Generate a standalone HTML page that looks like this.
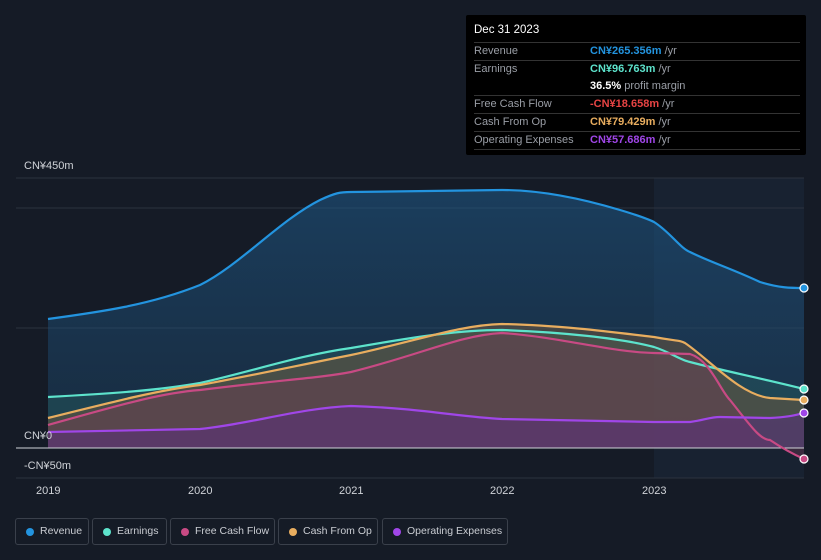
<!DOCTYPE html>
<html><head><meta charset="utf-8"><style>
body{margin:0;width:821px;height:560px;background:#151b26;font-family:"Liberation Sans",sans-serif;overflow:hidden;position:relative}
.tt{position:absolute;left:466px;top:15px;width:340px;height:140px;background:#000;border-radius:2px;box-sizing:border-box;padding:0 6px 0 8px;font-size:11px}
.tt .h{color:#fff;font-size:11.5px;padding:9px 0 6px 0;border-bottom:1px solid #333}
.r{display:flex;height:17px;line-height:17px;border-bottom:1px solid #333}
.r.nb{border-bottom:none}
.r .k{width:116px;color:#9a9ea6}
.r .v b{font-weight:bold}
.g{color:#9a9ea6}
.lab{position:absolute;color:#d0d3d8;font-size:11px}
.leg{position:absolute;top:518px;height:27px;border:1px solid #3a404b;border-radius:3px;box-sizing:border-box;color:#c9ccd2;font-size:10.5px;line-height:25px;padding-left:24px;white-space:nowrap}
.leg i{position:absolute;left:10px;top:9px;width:8px;height:8px;border-radius:50%}
</style></head><body>
<svg width="821" height="560" style="position:absolute;left:0;top:0">
<defs>
<linearGradient id="rg" x1="0" y1="0" x2="0" y2="1"><stop offset="0" stop-color="#1e5a8a" stop-opacity=".55"/><stop offset="1" stop-color="#1e4a70" stop-opacity=".35"/></linearGradient>
</defs>
<rect x="654" y="178" width="150" height="300" fill="#1b2838" opacity=".6"/>
<line x1="16" y1="178" x2="804" y2="178" stroke="#2c333e"/>
<line x1="16" y1="208" x2="804" y2="208" stroke="#2c333e"/>
<line x1="16" y1="328" x2="804" y2="328" stroke="#2c333e"/>
<line x1="16" y1="478" x2="804" y2="478" stroke="#2c333e"/>
<path d="M48,319 C100,312 150,305 200,285 C240,265 280,220 320,200 C335,193 340,192 351,192 L502,190 C540,190 580,198 620,210 C640,216 650,220 654,222 C670,232 680,248 690,252 C710,262 730,268 760,282 C780,288 790,288 804,288 L804,448 L48,448Z" fill="url(#rg)"/>
<path d="M48,397 C120,393 160,390 200,383 C250,372 300,355 351,348 C420,336 460,330 502,330 C560,332 620,338 654,347 C670,352 680,360 690,362 C720,370 760,378 804,389 L804,448 L48,448Z" fill="#2a6a68" opacity=".35"/>
<path d="M48,418 C120,400 160,390 200,385 C260,374 300,365 351,355 C420,340 460,325 502,324 C560,325 620,333 654,337 C675,341 680,340 685,343 C710,360 740,395 770,398 L804,400 L804,448 L48,448Z" fill="#7a5a3a" opacity=".45"/>
<path d="M48,425 C120,405 160,393 200,390 C280,380 320,378 351,372 C420,355 460,335 502,333 C560,337 610,352 654,353 L690,354 C710,360 720,390 730,400 C750,425 760,440 770,440 C785,450 795,455 804,459 L804,448 L48,448Z" fill="#7a3a5a" opacity=".35"/>
<path d="M48,432 L200,429 C250,424 300,408 351,406 C420,408 460,417 502,419 L654,422 L690,422 C705,420 710,417 720,417 L770,418 C790,417 795,415 804,413 L804,448 L48,448Z" fill="#5a2a8a" opacity=".45"/>
<line x1="16" y1="448" x2="804" y2="448" stroke="#d0d3d8"/>
<g fill="none" stroke-width="2.2">
<path d="M48,319 C100,312 150,305 200,285 C240,265 280,220 320,200 C335,193 340,192 351,192 L502,190 C540,190 580,198 620,210 C640,216 650,220 654,222 C670,232 680,248 690,252 C710,262 730,268 760,282 C780,288 790,288 804,288" stroke="#2394df"/>
<path d="M48,397 C120,393 160,390 200,383 C250,372 300,355 351,348 C420,336 460,330 502,330 C560,332 620,338 654,347 C670,352 680,360 690,362 C720,370 760,378 804,389" stroke="#5de3cc"/>
<path d="M48,418 C120,400 160,390 200,385 C260,374 300,365 351,355 C420,340 460,325 502,324 C560,325 620,333 654,337 C675,341 680,340 685,343 C710,360 740,395 770,398 L804,400" stroke="#e8ad5f"/>
<path d="M48,425 C120,405 160,393 200,390 C280,380 320,378 351,372 C420,355 460,335 502,333 C560,337 610,352 654,353 L690,354 C710,360 720,390 730,400 C750,425 760,440 770,440 C785,450 795,455 804,459" stroke="#c84a84"/>
<path d="M48,432 L200,429 C250,424 300,408 351,406 C420,408 460,417 502,419 L654,422 L690,422 C705,420 710,417 720,417 L770,418 C790,417 795,415 804,413" stroke="#a046e8"/>
</g>
<g stroke="#fff" stroke-width="1.2">
<circle cx="804" cy="288" r="4" fill="#2394df"/><circle cx="804" cy="389" r="4" fill="#5de3cc"/><circle cx="804" cy="400" r="4" fill="#e8ad5f"/><circle cx="804" cy="413" r="4" fill="#a046e8"/><circle cx="804" cy="459" r="4" fill="#c84a84"/>
</g>
</svg>
<div class="lab" style="left:24px;top:160px">CN¥450m</div>
<div class="lab" style="left:24px;top:430px">CN¥0</div>
<div class="lab" style="left:24px;top:460px">-CN¥50m</div>
<div class="lab" style="left:36px;top:485px">2019</div>
<div class="lab" style="left:188px;top:485px">2020</div>
<div class="lab" style="left:339px;top:485px">2021</div>
<div class="lab" style="left:490px;top:485px">2022</div>
<div class="lab" style="left:642px;top:485px">2023</div>
<div class="tt">
<div class="h">Dec 31 2023</div>
<div class="r"><span class="k">Revenue</span><span class="v"><b style="color:#2394df">CN¥265.356m</b> <span class="g">/yr</span></span></div>
<div class="r nb"><span class="k">Earnings</span><span class="v"><b style="color:#5de3cc">CN¥96.763m</b> <span class="g">/yr</span></span></div>
<div class="r"><span class="k"></span><span class="v"><b style="color:#fff">36.5%</b> <span class="g">profit margin</span></span></div>
<div class="r"><span class="k">Free Cash Flow</span><span class="v"><b style="color:#e84444">-CN¥18.658m</b> <span class="g">/yr</span></span></div>
<div class="r"><span class="k">Cash From Op</span><span class="v"><b style="color:#e8ad5f">CN¥79.429m</b> <span class="g">/yr</span></span></div>
<div class="r"><span class="k">Operating Expenses</span><span class="v"><b style="color:#a046e8">CN¥57.686m</b> <span class="g">/yr</span></span></div>
</div>
<div class="leg" style="left:15px;width:74px"><i style="background:#2394df"></i>Revenue</div>
<div class="leg" style="left:92px;width:75px"><i style="background:#5de3cc"></i>Earnings</div>
<div class="leg" style="left:170px;width:105px"><i style="background:#c84a84"></i>Free Cash Flow</div>
<div class="leg" style="left:278px;width:100px"><i style="background:#e8ad5f"></i>Cash From Op</div>
<div class="leg" style="left:382px;width:126px"><i style="background:#a046e8"></i>Operating Expenses</div>
</body></html>
